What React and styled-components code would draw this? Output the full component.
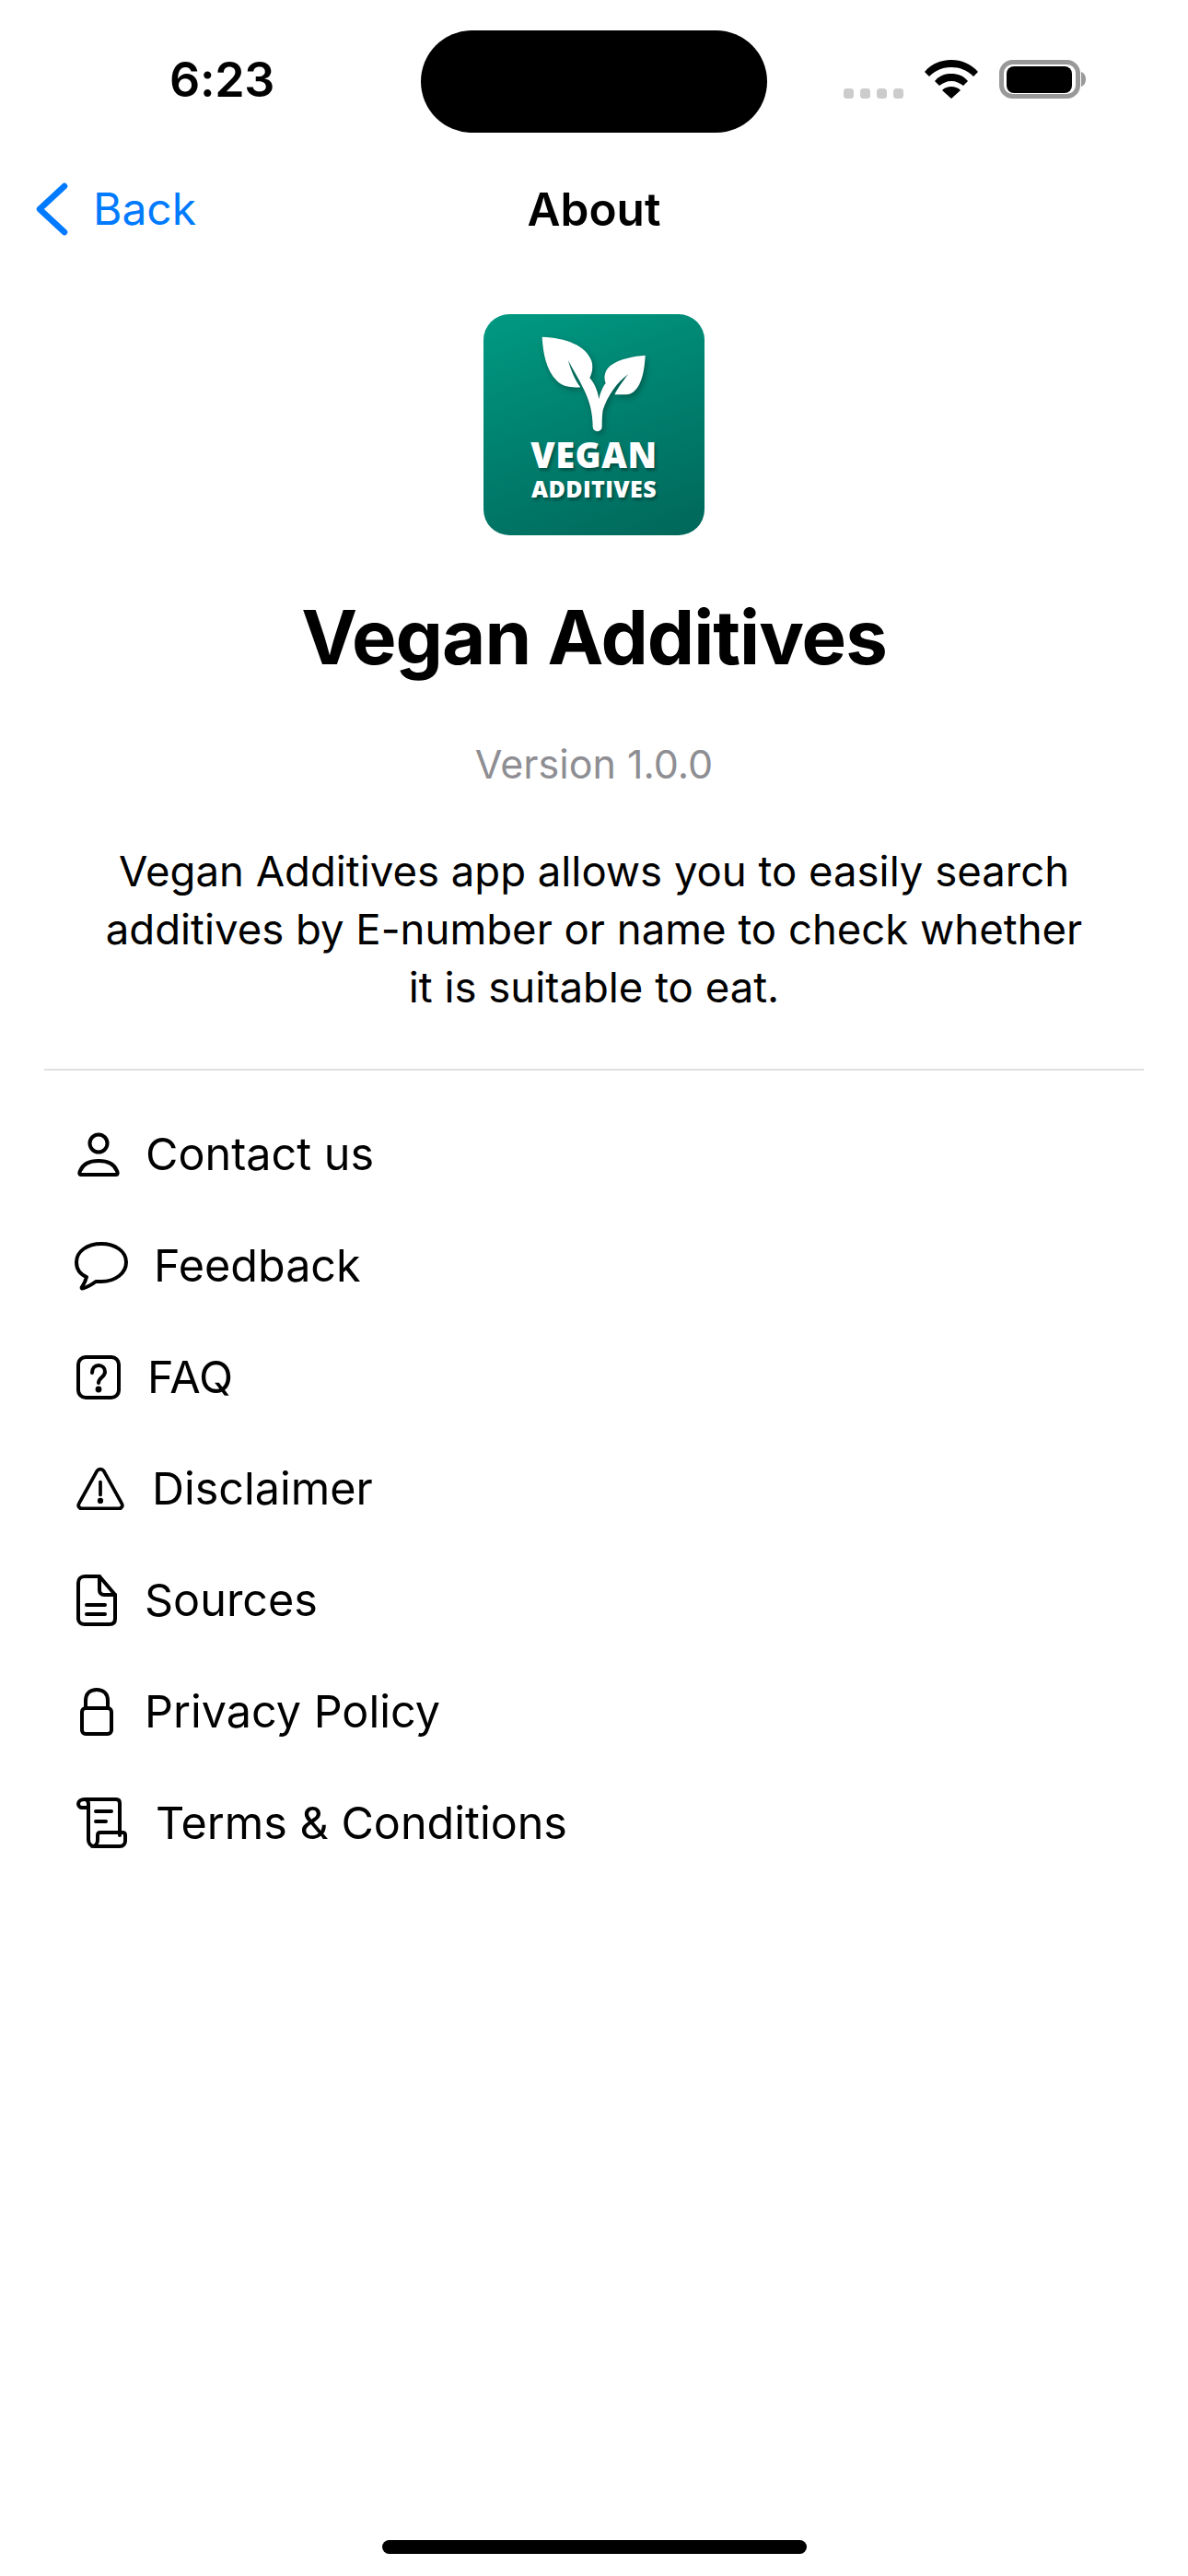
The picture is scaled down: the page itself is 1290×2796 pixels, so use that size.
import React from "react";
import styled, { createGlobalStyle } from "styled-components";

const Global = createGlobalStyle`
  html, body { margin: 0; padding: 0; background: #fff; }
  body { font-family: Inter, "Noto Sans", sans-serif; color: #000; }
`;
const Page = styled.div`
  width: 1290px; height: 2796px; position: relative; overflow: hidden; background: #fff;
  display: flex; flex-direction: column;
`;
const StatusBar = styled.div`
  height: 177px; flex: none; display: grid; grid-template-columns: 457px 376px 1fr; align-items: start;
`;
const Time = styled.div`
  padding: 57px 0 0 184px; font-size: 52px; line-height: 60px; font-weight: 600; letter-spacing: -0.3px;
`;
const Island = styled.div`
  margin-top: 33px; height: 111px; border-radius: 56px; background: #000;
`;
const StatusIcons = styled.div`
  padding: 65px 0 0 83px; display: flex; align-items: flex-end; gap: 23px;
`;
const Nav = styled.div`
  height: 100px; flex: none; display: grid; grid-template-columns: 1fr auto 1fr; align-items: center; padding: 0 38px;
`;
const BackLink = styled.div`
  display: flex; align-items: center; gap: 27px; color: #007aff; font-size: 48px; line-height: 60px;
`;
const NavTitle = styled.div`
  font-size: 49.5px; line-height: 60px; font-weight: 600;
`;
const Content = styled.div`
  display: flex; flex-direction: column; align-items: center; padding-top: 64px;
`;
const Logo = styled.div`
  width: 240px; height: 240px; border-radius: 28px; flex: none; display: flex; flex-direction: column; align-items: center;
  background: linear-gradient(160deg, #009a82 0%, #007f6e 50%, #00675a 100%);
  color: #fff; padding-top: 24px; box-sizing: border-box; font-family: "Open Sans", sans-serif; font-weight: 800;
  text-shadow: 2px 3px 3px rgba(0,0,0,.3);
`;
const LeafMark = styled.svg`
  width: 114px; height: 104px; flex: none; margin-bottom: 2px; filter: drop-shadow(2px 3px 3px rgba(0,0,0,.3));
`;
const LogoLine = styled.div`
  font-size: ${p => p.$size}px; line-height: ${p => p.$lh}px; letter-spacing: ${p => p.$track}px; white-space: nowrap;
`;
const Title = styled.h1`
  margin: 61px 0 0; font-size: 81.5px; line-height: 100px; font-weight: 700; letter-spacing: -1px;
`;
const Version = styled.div`
  margin-top: 59px; font-size: 43px; line-height: 56px; color: #8e8e93;
`;
const Description = styled.p`
  margin: 57px 0 0; width: 1090px; text-align: center; font-size: 45.5px; line-height: 63px;
`;
const Divider = styled.div`
  align-self: stretch; margin: 57px 48px 0; height: 2px; background: #e0e0e0; flex: none;
`;
const Menu = styled.div`
  align-self: stretch; padding-top: 30px; display: flex; flex-direction: column;
`;
const Row = styled.div`
  height: 121px; display: flex; align-items: center; padding-left: ${p => p.$left}px; gap: ${p => p.$gap}px;
  font-size: 48.5px;
`;
const Icon = styled.svg`
  flex: none; fill: none; stroke: #000; stroke-width: 4; stroke-linecap: round; stroke-linejoin: round;
`;
const HomeBar = styled.div`
  position: absolute; left: 415px; bottom: 24px; width: 461px; height: 15px; border-radius: 8px; background: #000;
`;

const rows = [
  { label: "Contact us", left: 84, gap: 28, w: 46, h: 48,
    d: <><circle cx="23" cy="12" r="9.5" /><path d="M4 46c-2 0-2-2-1-4 3-8 10-11 20-11s17 3 20 11c1 2 1 4-1 4z" /></> },
  { label: "Feedback", left: 80, gap: 27, w: 60, h: 54,
    d: <path d="M30 3C15 3 3 11 3 23c0 7 4 13 11 16-1 4-3 8-5 11-1 1 0 2 2 1 4-1 9-4 13-7 2 0 4 0 6 0 15 0 27-9 27-21S45 3 30 3z" /> },
  { label: "FAQ", left: 82, gap: 28, w: 50, h: 50,
    d: <><rect x="3" y="3" width="44" height="44" rx="8" /><path d="M18 20c0-5 3-8 7-8s7 3 7 7c0 6-7 6-7 12" /><circle cx="25" cy="38" r="1.4" fill="#000" /></> },
  { label: "Disclaimer", left: 83, gap: 30, w: 52, h: 48, vb: "0 0 56 52",
    d: <><path d="M24 5c2-3 6-3 8 0l21 38c2 3 0 6-3 6H6c-3 0-5-3-3-6z" /><path d="M28 18v15" /><circle cx="28" cy="40" r="1.4" fill="#000" /></> },
  { label: "Sources", left: 82, gap: 29, w: 46, h: 58,
    d: <><path d="M10 3h16l17 20v26c0 4-2 6-6 6H10c-4 0-7-2-7-6V10c0-4 3-7 7-7z" /><path d="M26 3v15c0 3 2 5 5 5h12M12 34h20M12 44h20" /></> },
  { label: "Privacy Policy", left: 86, gap: 33, w: 38, h: 54,
    d: <><rect x="3" y="23" width="32" height="28" rx="4" /><path d="M7 23V15C7 7 12 3 19 3s12 4 12 12v8" /></> },
  { label: "Terms & Conditions", left: 82, gap: 30, w: 57, h: 57,
    d: <><path d="M10 3h34c3 0 4 2 4 4v35M10 3c-4 0-7 2-7 5 0 2 2 4 4 4h6M10 3c3 0 4 3 4 6v38c0 4 3 7 6 7h28c4 0 6-3 6-6v-6c0-2-1-3-3-3H27c-2 0-3 1-3 3v5c0 4-2 7-6 7" /><path d="M22 16h17M22 27h11" /></> },
];

export default function App() {
  return (
    <Page>
      <Global />
      <StatusBar>
        <Time>6:23</Time>
        <Island />
        <StatusIcons>
          <svg width="65" height="11" viewBox="0 0 65 11" fill="#cccccc">
            <rect x="0" y="0" width="11" height="11" rx="3.5" />
            <rect x="18" y="0" width="11" height="11" rx="3.5" />
            <rect x="36" y="0" width="11" height="11" rx="3.5" />
            <rect x="54" y="0" width="11" height="11" rx="3.5" />
          </svg>
          <svg width="58" height="42" viewBox="0 0 58 42" fill="#000">
            <path d="M29 0C18 0 8 4 0 13l5 5C12 11 20 8 29 8s17 3 24 10l5-5C50 4 40 0 29 0z" />
            <path d="M29 15c-7 0-13 2-18 8l5 5c4-3 8-5 13-5s9 2 13 5l5-5c-5-6-11-8-18-8z" />
            <path d="M29 29c-4 0-7 1-10 4l10 9 10-9c-3-3-6-4-10-4z" />
          </svg>
          <svg width="94" height="42" viewBox="0 0 94 42">
            <rect x="2.5" y="2.5" width="83" height="37" rx="12" fill="none" stroke="#999" strokeWidth="5" />
            <rect x="8" y="7" width="71" height="29" rx="8" fill="#000" />
            <path d="M89 13c3 1 5 4 5 8s-2 7-5 8z" fill="#999" />
          </svg>
        </StatusIcons>
      </StatusBar>
      <Nav>
        <BackLink>
          <svg width="36" height="58" viewBox="0 0 36 58" fill="none" stroke="#007aff" strokeWidth="6.5" strokeLinecap="round" strokeLinejoin="round">
            <path d="M32 4 5 29l27 25" />
          </svg>
          Back
        </BackLink>
        <NavTitle>About</NavTitle>
        <div />
      </Nav>
      <Content>
        <Logo>
          <LeafMark viewBox="265 135 342 312">
            <path fill="#fff" d="M267 137C345 140 410 165 428 215C434 235 430 255 422 270C440 290 450 320 452 340C456 320 464 300 474 288C466 265 472 245 490 230C520 208 565 200 603 197C600 260 585 322 540 325L503 325C510 310 530 280 548 258C510 285 480 330 465 375C462 395 462 415 462 430A15 15 0 0 1 432 430C432 380 420 340 400 302C385 270 365 240 352 213C360 245 375 280 392 301C360 303 335 300 315 280C280 245 270 190 267 137Z" />
          </LeafMark>
          <LogoLine $size={38} $lh={44} $track={0.6}>VEGAN</LogoLine>
          <LogoLine $size={25} $lh={30} $track={0.4}>ADDITIVES</LogoLine>
        </Logo>
        <Title>Vegan Additives</Title>
        <Version>Version 1.0.0</Version>
        <Description>Vegan Additives app allows you to easily search additives by E-number or name to check whether it is suitable to eat.</Description>
        <Divider />
        <Menu>
          {rows.map(r => (
            <Row key={r.label} $left={r.left} $gap={r.gap}>
              <Icon width={r.w} height={r.h} viewBox={r.vb || `0 0 ${r.w} ${r.h}`}>{r.d}</Icon>
              {r.label}
            </Row>
          ))}
        </Menu>
      </Content>
      <HomeBar />
    </Page>
  );
}
